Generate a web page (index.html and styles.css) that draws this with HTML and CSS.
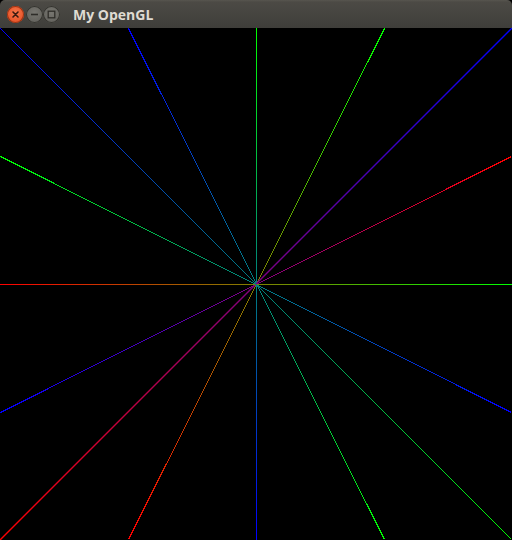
FILE: index.html
```html
<!DOCTYPE html>
<html>
<head>
<meta charset="utf-8">
<link rel="stylesheet" href="styles.css">
</head>
<body>
<div class="window">
  <div class="titlebar">
    <div class="buttons">
      <span class="btn close">
        <svg width="17" height="17" viewBox="0 0 17 17"><path d="M6 6 L11 11 M11 6 L6 11" stroke="#3a1a10" stroke-width="1.6" stroke-linecap="round"/></svg>
      </span>
      <span class="btn min">
        <svg width="17" height="17" viewBox="0 0 17 17"><path d="M5 8.5 H12" stroke="#2e2d29" stroke-width="1.6"/></svg>
      </span>
      <span class="btn">
        <svg width="17" height="17" viewBox="0 0 17 17"><rect x="5.2" y="5.2" width="6.6" height="6.6" fill="none" stroke="#2e2d29" stroke-width="1.3"/></svg>
      </span>
    </div>
    <span class="title">My OpenGL</span>
  </div>
  <svg class="canvas" width="512" height="512" viewBox="0 0 512 512" shape-rendering="crispEdges">
    <defs>
      <linearGradient id="g1" gradientUnits="userSpaceOnUse" x1="0" y1="0" x2="512" y2="512"><stop offset="0" stop-color="#0000ff"/><stop offset="1" stop-color="#00ff00"/></linearGradient>
      <linearGradient id="g2" gradientUnits="userSpaceOnUse" x1="128" y1="0" x2="384" y2="512"><stop offset="0" stop-color="#0000ff"/><stop offset="1" stop-color="#00ff00"/></linearGradient>
      <linearGradient id="g3" gradientUnits="userSpaceOnUse" x1="256" y1="0" x2="256" y2="512"><stop offset="0" stop-color="#00ff00"/><stop offset="1" stop-color="#0000ff"/></linearGradient>
      <linearGradient id="g4" gradientUnits="userSpaceOnUse" x1="384" y1="0" x2="128" y2="512"><stop offset="0" stop-color="#00ff00"/><stop offset="1" stop-color="#ff0000"/></linearGradient>
      <linearGradient id="g5" gradientUnits="userSpaceOnUse" x1="0" y1="0" x2="0" y2="512"><stop offset="0" stop-color="#0000ff"/><stop offset="1" stop-color="#ff0000"/></linearGradient>
      <linearGradient id="g6" gradientUnits="userSpaceOnUse" x1="512" y1="128" x2="0" y2="384"><stop offset="0" stop-color="#ff0000"/><stop offset="1" stop-color="#0000ff"/></linearGradient>
      <linearGradient id="g7" gradientUnits="userSpaceOnUse" x1="0" y1="256" x2="512" y2="256"><stop offset="0" stop-color="#ff0000"/><stop offset="1" stop-color="#00ff00"/></linearGradient>
      <linearGradient id="g8" gradientUnits="userSpaceOnUse" x1="0" y1="128" x2="512" y2="384"><stop offset="0" stop-color="#00ff00"/><stop offset="1" stop-color="#0000ff"/></linearGradient>
    </defs>
    <line x1="0.5" y1="0.5" x2="511.5" y2="511.5" stroke="url(#g1)"/>
    <line x1="128.5" y1="0.5" x2="384.5" y2="511.5" stroke="url(#g2)"/>
    <line x1="256.5" y1="0" x2="256.5" y2="512" stroke="url(#g3)"/>
    <line x1="384.5" y1="0.5" x2="128.5" y2="511.5" stroke="url(#g4)"/>
    <line class="aa" x1="512" y1="0" x2="0" y2="512" stroke="url(#g5)" stroke-width="1.4"/>
    <line x1="511.5" y1="128.5" x2="0.5" y2="384.5" stroke="url(#g6)"/>
    <line x1="0" y1="256.5" x2="512" y2="256.5" stroke="url(#g7)"/>
    <line x1="0.5" y1="128.5" x2="511.5" y2="384.5" stroke="url(#g8)"/>
  </svg>
</div>
</body>
</html>
```

FILE: styles.css
```css
html, body {
  margin: 0;
  padding: 0;
  background: #000;
}
.window {
  width: 512px;
  height: 540px;
  display: flex;
  flex-direction: column;
  overflow: hidden;
}
.titlebar {
  height: 28px;
  flex: none;
  display: flex;
  align-items: center;
  background: linear-gradient(#57554f 0px, #4c4a45 2px, #3f3e3a 28px);
  border-radius: 5px 5px 0 0;
  box-sizing: border-box;
  padding-left: 7px;
}
.buttons {
  display: flex;
  margin-top: 1px;
}
.btn {
  width: 17px;
  height: 17px;
  border-radius: 50%;
  background: radial-gradient(circle at 50% 40%, #777670, #5c5b56);
  box-shadow: inset 0 0 0 1px #35342f;
  display: flex;
  align-items: center;
  justify-content: center;
}
.btn svg {
  display: block;
  width: 17px;
  height: 17px;
}
.close {
  background: radial-gradient(circle at 50% 40%, #f6764a, #e2461c);
  box-shadow: inset 0 0 0 1px #9a3414;
}
.min {
  margin-left: 2px;
}
.title {
  margin-left: 13px;
  font-family: "Open Sans", "DejaVu Sans", sans-serif;
  font-weight: 700;
  font-size: 14px;
  color: #dfdbd2;
  margin-top: 1px;
}
.canvas {
  display: block;
  flex: none;
  background: #000;
}
.aa {
  shape-rendering: geometricPrecision;
}
```
